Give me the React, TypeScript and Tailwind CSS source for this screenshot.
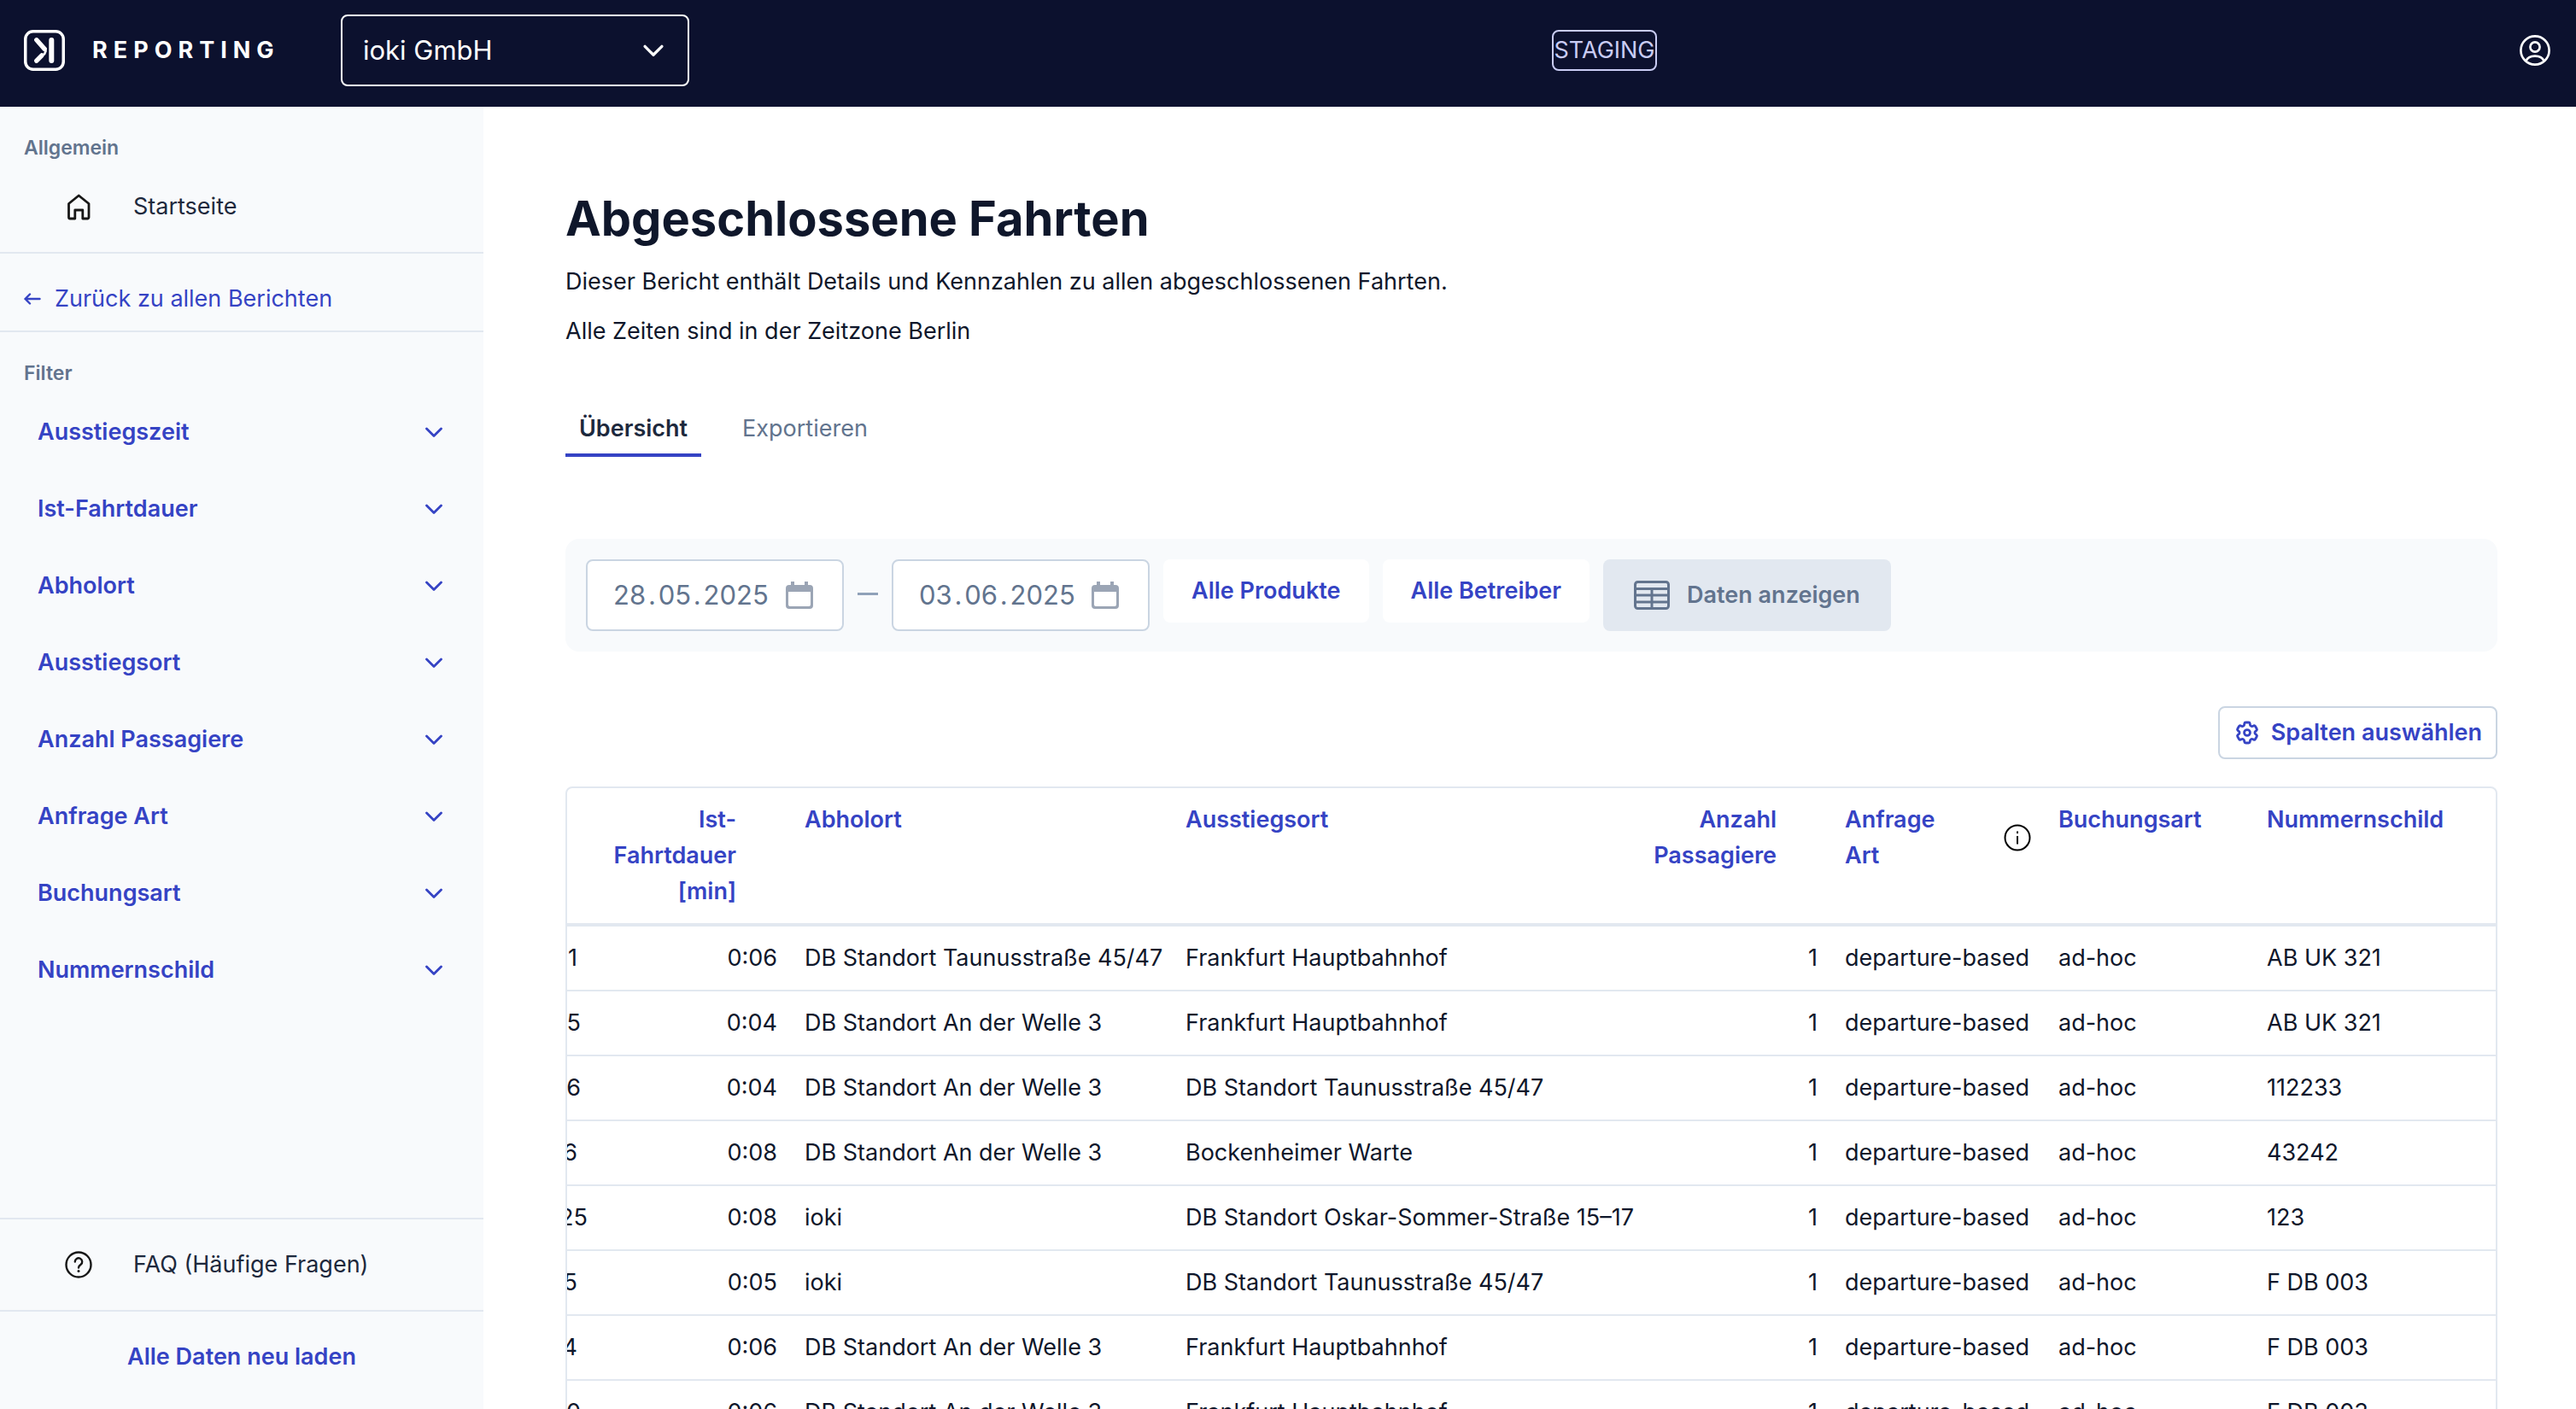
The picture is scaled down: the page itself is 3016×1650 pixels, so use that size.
import type { ReactNode } from 'react';

const filters = [
  'Ausstiegszeit',
  'Ist-Fahrtdauer',
  'Abholort',
  'Ausstiegsort',
  'Anzahl Passagiere',
  'Anfrage Art',
  'Buchungsart',
  'Nummernschild',
];

// clip: how much of the scrolled-out first column is still visible
const rides = [
  { id: '1', clip: 'w-3', duration: '0:06', from: 'DB Standort Taunusstraße 45/47', to: 'Frankfurt Hauptbahnhof', plate: 'AB UK 321' },
  { id: '5', clip: 'w-4', duration: '0:04', from: 'DB Standort An der Welle 3', to: 'Frankfurt Hauptbahnhof', plate: 'AB UK 321' },
  { id: '6', clip: 'w-4', duration: '0:04', from: 'DB Standort An der Welle 3', to: 'DB Standort Taunusstraße 45/47', plate: '112233' },
  { id: '6', clip: 'w-3', duration: '0:08', from: 'DB Standort An der Welle 3', to: 'Bockenheimer Warte', plate: '43242' },
  { id: '25', clip: 'w-6', duration: '0:08', from: 'ioki', to: 'DB Standort Oskar-Sommer-Straße 15–17', plate: '123' },
  { id: '5', clip: 'w-3', duration: '0:05', from: 'ioki', to: 'DB Standort Taunusstraße 45/47', plate: 'F DB 003' },
  { id: '4', clip: 'w-3', duration: '0:06', from: 'DB Standort An der Welle 3', to: 'Frankfurt Hauptbahnhof', plate: 'F DB 003' },
  { id: '0', clip: 'w-4', duration: '0:06', from: 'DB Standort An der Welle 3', to: 'Frankfurt Hauptbahnhof', plate: 'F DB 003' },
];

function Logo() {
  return (
    <svg viewBox="0 0 48 48" className="size-12 shrink-0" fill="none" stroke="white" strokeLinecap="round">
      <rect x="1.75" y="1.75" width="44.5" height="44.5" rx="9" strokeWidth="3.5" />
      <path d="M32.3 12v24" strokeWidth="6" />
      <path d="M14.8 11.8 24.2 22.4M14.8 36.2l6.2-6.4" strokeWidth="5.4" />
      <path d="M24 28.4l1.6-3.6" strokeWidth="2.6" />
    </svg>
  );
}

function ChevronDown({ className }: { className: string }) {
  return (
    <svg viewBox="0 0 24 24" className={className} fill="none" stroke="currentColor" strokeWidth="2.8" strokeLinecap="round" strokeLinejoin="round">
      <path d="M3.5 8l8.500 8.500L20.500 8" />
    </svg>
  );
}

function CalendarIcon() {
  return (
    <svg viewBox="0 0 32 32" className="size-8">
      <path fillRule="evenodd" fill="currentColor" d="M6 0h4v4h12V0h4v4h2a4 4 0 0 1 4 4v20a4 4 0 0 1-4 4H4a4 4 0 0 1-4-4V8a4 4 0 0 1 4-4h2zM3 12v15a2 2 0 0 0 2 2h22a2 2 0 0 0 2-2V12z" />
    </svg>
  );
}

function TableIcon() {
  return (
    <svg viewBox="0 0 42 34" className="h-[34px] w-[42px]" fill="none" stroke="currentColor" strokeWidth="3">
      <rect x="1.5" y="1.5" width="39" height="31" rx="3" />
      <path d="M1.5 9.5h39M1.5 17h39M1.5 25h39M21 9.5v23" />
    </svg>
  );
}

function GearIcon() {
  return (
    <svg viewBox="0 0 24 24" className="size-8" fill="none" stroke="currentColor" strokeWidth="2.1" strokeLinecap="round" strokeLinejoin="round">
      <path d="M9.594 3.94c.09-.542.56-.94 1.11-.94h2.593c.55 0 1.02.398 1.11.94l.213 1.281c.063.374.313.686.645.87.074.04.147.083.22.127.325.196.72.257 1.075.124l1.217-.456a1.125 1.125 0 0 1 1.37.49l1.296 2.247a1.125 1.125 0 0 1-.26 1.431l-1.003.827c-.293.241-.438.613-.43.992a7.723 7.723 0 0 1 0 .255c-.008.378.137.75.43.991l1.004.827c.424.35.534.955.26 1.43l-1.298 2.247a1.125 1.125 0 0 1-1.369.491l-1.217-.456c-.355-.133-.75-.072-1.076.124a6.47 6.47 0 0 1-.22.128c-.331.183-.581.495-.644.869l-.213 1.281c-.09.543-.56.94-1.11.94h-2.594c-.55 0-1.019-.398-1.11-.94l-.213-1.281c-.062-.374-.312-.686-.644-.87a6.52 6.52 0 0 1-.22-.127c-.325-.196-.72-.257-1.076-.124l-1.217.456a1.125 1.125 0 0 1-1.369-.49l-1.297-2.247a1.125 1.125 0 0 1 .26-1.431l1.004-.827c.292-.24.437-.613.43-.991a6.932 6.932 0 0 1 0-.255c.007-.38-.138-.751-.43-.992l-1.004-.827a1.125 1.125 0 0 1-.26-1.43l1.297-2.247a1.125 1.125 0 0 1 1.37-.491l1.216.456c.356.133.751.072 1.076-.124.072-.044.146-.086.22-.128.332-.183.582-.495.644-.869z" />
      <circle cx="12" cy="12" r="2.6" />
    </svg>
  );
}

function Header() {
  return (
    <header className="flex items-center bg-[#0c112e] pt-[17px] pr-[30px] pb-6 pl-7 text-white">
      <a href="#" className="flex w-[371px] items-center gap-8">
        <Logo />
        <span className="text-[27px] leading-10 font-bold tracking-[7px]">REPORTING</span>
      </a>
      <div className="relative w-[408px]">
        <select aria-label="Anbieter" className="h-[84px] w-full appearance-none rounded-lg border-2 border-white bg-transparent px-6 text-[31px] leading-10">
          <option>ioki GmbH</option>
        </select>
        <ChevronDown className="pointer-events-none absolute top-7 right-7 size-7" />
      </div>
      <div className="flex flex-1 justify-center">
        <span className="rounded-lg border-2 border-[#c9ccf3] text-[27px] leading-[44px] text-[#c9ccf3]">STAGING</span>
      </div>
      <button type="button" aria-label="Konto">
        <svg viewBox="0 0 36 36" className="size-9" fill="none" stroke="currentColor" strokeWidth="2.6">
          <circle cx="18" cy="18" r="16.6" />
          <circle cx="18" cy="14" r="5.6" />
          <path d="M7.5 30.5C9 26.5 13 24.6 18 24.6s9 1.9 10.500 5.9" />
        </svg>
      </button>
    </header>
  );
}

function Sidebar() {
  return (
    <aside className="flex w-[566px] shrink-0 flex-col bg-slate-50 text-[27px] leading-[42px]">
      <nav className="flex flex-col">
        <h2 className="px-7 pt-8 text-[23px] leading-8 font-semibold text-slate-500">Allgemein</h2>
        <a href="#" className="flex items-center border-b-2 border-slate-200 py-8 pl-[76px] text-slate-800">
          <svg viewBox="0 0 32 32" className="mr-12 size-8 text-neutral-900" fill="none" stroke="currentColor" strokeWidth="2.8" strokeLinejoin="round">
            <path d="M4.5 12.5 16.2 3 28 12.500V28.500a1.500 1.500 0 0 1-1.500 1.500H20.800V20h-9v10H6a1.500 1.500 0 0 1-1.500-1.500z" />
          </svg>
          Startseite
        </a>
        <a href="#" className="flex items-center gap-4 border-b-2 border-slate-200 px-7 pt-8 pb-4 text-[#3543c4]">
          <svg viewBox="0 0 20 20" className="size-5" fill="none" stroke="currentColor" strokeWidth="2.4" strokeLinecap="round" strokeLinejoin="round">
            <path d="M18.5 10h-17M7 4.500 1.500 10 7 15.500" />
          </svg>
          Zurück zu allen Berichten
        </a>
      </nav>
      <h2 className="mb-2 px-7 pt-8 text-[23px] leading-8 font-semibold text-slate-500">Filter</h2>
      {filters.map((filter) => (
        <button key={filter} type="button" className="flex items-center justify-between py-6 pr-[46px] pl-11 font-semibold text-[#3543c4]">
          {filter}
          <ChevronDown className="size-6" />
        </button>
      ))}
      <div className="mt-auto flex flex-col">
        <a href="#" className="flex items-center border-y-2 border-slate-200 py-8 pl-[76px] text-slate-800">
          <svg viewBox="0 0 32 32" className="mr-12 size-8 text-neutral-900" fill="none" stroke="currentColor" strokeWidth="2.4" strokeLinecap="round">
            <circle cx="16" cy="16" r="14.5" />
            <path d="M11.8 12.5a4.200 4.200 0 1 1 6.800 3.300c-1.700 1.200-2.600 1.900-2.600 3.700" />
            <path d="M16 23.400v.2" strokeWidth="3" />
          </svg>
          FAQ (Häufige Fragen)
        </a>
        <button type="button" className="pt-8 pb-10 font-semibold text-[#3543c4]">Alle Daten neu laden</button>
      </div>
    </aside>
  );
}

function DateField({ label, value }: { label: string; value: string }) {
  return (
    <div className="flex h-[84px] w-[302px] items-center rounded-lg border-2 border-slate-300 bg-white pr-[34px] pl-[30px]">
      <input aria-label={label} defaultValue={value} className="w-full min-w-0 text-[31px] leading-10 text-slate-500 outline-none" />
      <button type="button" aria-label={`${label} wählen`} className="shrink-0 text-[#9ba5b5]">
        <CalendarIcon />
      </button>
    </div>
  );
}

function FilterButton({ children }: { children: ReactNode }) {
  return (
    <button type="button" className="rounded-lg bg-white px-[33px] py-4 font-semibold text-[#3543c4]">{children}</button>
  );
}

function RidesTable() {
  return (
    <div className="mt-8 overflow-hidden rounded-lg border-2 border-slate-200">
      <table className="w-full table-fixed border-separate border-spacing-0">
        <colgroup>
          <col className="w-10" />
          <col className="w-[222px]" />
          <col className="w-[446px]" />
          <col className="w-[554px]" />
          <col className="w-[218px]" />
          <col className="w-[250px]" />
          <col className="w-[244px]" />
          <col />
        </colgroup>
        <thead className="text-left text-[#3543c4] [&_th]:border-b-4 [&_th]:border-slate-200 [&_th]:py-4 [&_th]:align-top [&_th]:font-semibold">
          <tr>
            <th aria-label="Ausstiegszeit" />
            <th className="pr-16 text-right">Ist-<br />Fahrtdauer<br />[min]</th>
            <th className="px-4">Abholort</th>
            <th className="px-4">Ausstiegsort</th>
            <th className="pr-16 text-right">Anzahl<br />Passagiere</th>
            <th className="px-4">
              <div className="flex items-center justify-between">
                <span>Anfrage<br />Art</span>
                <svg viewBox="0 0 32 32" className="size-8 text-black" fill="none" stroke="currentColor" strokeWidth="2">
                  <circle cx="16" cy="16" r="14.5" />
                  <path d="M16 14v9.500M16 8.500V11" />
                </svg>
              </div>
            </th>
            <th className="px-4">Buchungsart</th>
            <th className="px-4">Nummernschild</th>
          </tr>
        </thead>
        <tbody className="[&_td]:border-b-2 [&_td]:border-slate-200 [&_td]:py-4 [&_td]:whitespace-nowrap">
          {rides.map((ride, i) => (
            <tr key={i}>
              <td>
                <div className={`flex justify-end overflow-hidden ${ride.clip}`}>{ride.id}</div>
              </td>
              <td className="pr-4 text-right">{ride.duration}</td>
              <td className="px-4">{ride.from}</td>
              <td className="px-4">{ride.to}</td>
              <td className="pr-4 text-right">1</td>
              <td className="px-4">departure-based</td>
              <td className="px-4">ad-hoc</td>
              <td className="px-4">{ride.plate}</td>
            </tr>
          ))}
        </tbody>
      </table>
    </div>
  );
}

export default function App() {
  return (
    <div className="flex h-screen flex-col overflow-hidden bg-white font-['Inter','Liberation_Sans',sans-serif] text-slate-900">
      <Header />
      <div className="flex min-h-0 flex-1">
        <Sidebar />
        <main className="min-w-0 flex-1 overflow-hidden pt-24 pr-[92px] pl-24 text-[27px] leading-[42px]">
          <h1 className="text-[56px] leading-[70px] font-bold">Abgeschlossene Fahrten</h1>
          <p className="mt-[18px]">Dieser Bericht enthält Details und Kennzahlen zu allen abgeschlossenen Fahrten.</p>
          <p className="mt-4">Alle Zeiten sind in der Zeitzone Berlin</p>

          <div role="tablist" className="mt-[72px] flex gap-8">
            <button type="button" role="tab" aria-selected="true" className="border-b-4 border-[#3543c4] px-4 pb-2 font-semibold text-slate-800">Übersicht</button>
            <button type="button" role="tab" aria-selected="false" className="border-b-4 border-transparent px-4 pb-2 text-slate-500">Exportieren</button>
          </div>

          <div className="mt-24 flex items-start gap-4 rounded-2xl bg-slate-50 p-6">
            <DateField label="Startdatum" value={'28\u200a.\u200a05\u200a.\u200a2025'} />
            <span className="mt-[39px] h-[3px] w-6 bg-slate-400" />
            <DateField label="Enddatum" value={'03\u200a.\u200a06\u200a.\u200a2025'} />
            <FilterButton>Alle Produkte</FilterButton>
            <FilterButton>Alle Betreiber</FilterButton>
            <button type="button" className="flex h-[84px] items-center gap-5 rounded-lg bg-slate-200 px-9 font-semibold text-slate-500">
              <TableIcon />
              Daten anzeigen
            </button>
          </div>

          <button type="button" className="mt-16 ml-auto flex items-center gap-3 rounded-lg border-2 border-slate-300 px-4 py-2 font-semibold text-[#3543c4]">
            <GearIcon />
            Spalten auswählen
          </button>

          <RidesTable />
        </main>
      </div>
    </div>
  );
}
